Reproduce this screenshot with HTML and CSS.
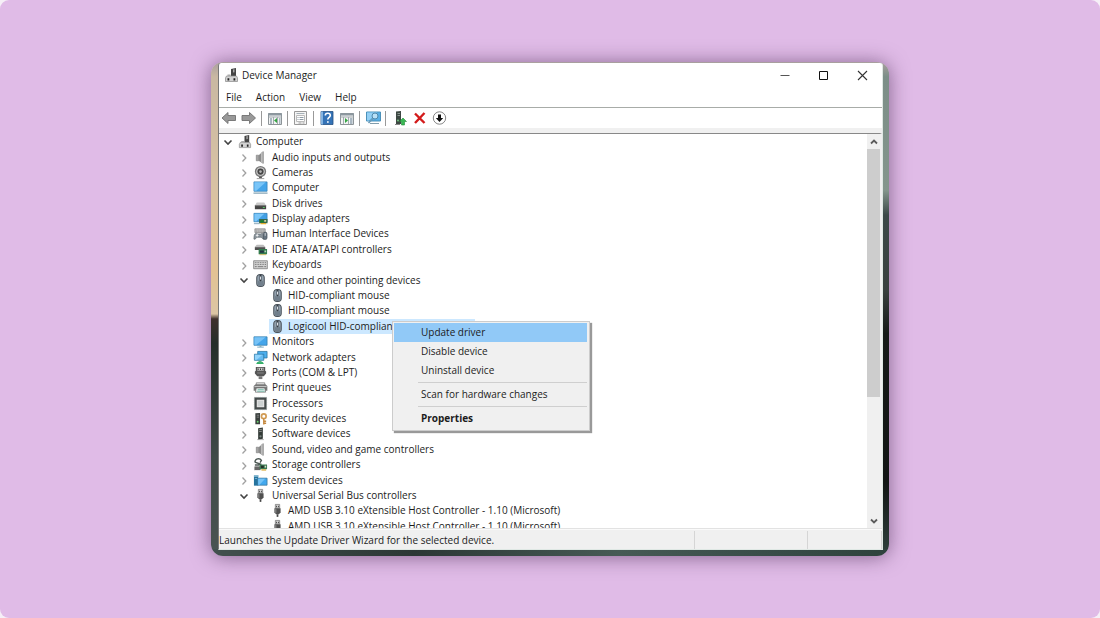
FILE: index.html
```html
<!DOCTYPE html>
<html lang="en">
<head>
<meta charset="utf-8">
<title>Device Manager</title>
<link rel="stylesheet" href="styles.css">
</head>
<body>
<svg class="sprite" aria-hidden="true">
  <symbol id="root" viewBox="0 0 16 16"><path d="M8 2l5-1v8H8z" fill="#454545"/><path d="M10 2.500l1.500-.3v3L10 5.500z" fill="#aaa"/><path d="M3.500 9h10l1 2v3.500h-12V11z" fill="#d2d2d2" stroke="#888" stroke-width=".7"/><path d="M4.500 11.200h1.800v2.300H4.500zM10.500 11.200h1.800v2.300h-1.800z" fill="#222"/><path d="M4.500 7.500h3V9h-3z" fill="#aaa"/></symbol>
  <symbol id="audio" viewBox="0 0 16 16"><path d="M3.500 5.500h2.500v6H3.500z" fill="#a5a5a5" stroke="#777" stroke-width=".6"/><path d="M6 5.500L10.500 1.500v13L6 11.500z" fill="#8b8b8b"/><path d="M8.500 3l2-1.500v13l-2-1.500z" fill="#bdbdbd"/><path d="M11 1.500v13" stroke="#777" stroke-width=".8"/></symbol>
  <symbol id="camera" viewBox="0 0 16 16"><circle cx="8" cy="7" r="6" fill="#777"/><circle cx="8" cy="7" r="4.600" fill="#c6c6c6"/><circle cx="8" cy="7" r="3.300" fill="#444"/><circle cx="8" cy="7" r="1.400" fill="#b4b4b4"/><path d="M6.500 12.500h3v1.500h-3z" fill="#555"/><path d="M4 14.500h8" stroke="#999"/></symbol>
  <symbol id="monitor" viewBox="0 0 16 16"><path d="M1 3h14v9H1z" fill="#45a5ea" stroke="#317eae" stroke-width=".8"/><path d="M1.500 3.500h12l-10 8h-2z" fill="#76c2f6"/><path d="M7 12.200h2v1.500H7z" fill="#8aa"/><path d="M4.500 14h7" stroke="#7aa8bd"/></symbol>
  <symbol id="computer" viewBox="0 0 16 16"><path d="M1 2h14v10H1z" fill="#45a5ea" stroke="#3681b5" stroke-width=".8"/><path d="M1.500 2.500h12l-10 9h-2z" fill="#79c5f8"/><path d="M.5 14h15" stroke="#86a5b6" stroke-width="1.200"/></symbol>
  <symbol id="disk" viewBox="0 0 16 16"><path d="M4 7h8l2 3H2z" fill="#c9c9c9"/><path d="M2 10h12v4H2z" fill="#444"/><path d="M2 10.300h12" stroke="#777"/><path d="M10.500 12.300h2" stroke="#57d767"/></symbol>
  <symbol id="display" viewBox="0 0 16 16"><path d="M1 2.500h14v9H1z" fill="#419fe4" stroke="#3681b5" stroke-width=".8"/><path d="M1.500 3H12l-8.500 8h-2z" fill="#79c5f8"/><path d="M1 13.500h6" stroke="#86a5b6"/><path d="M6.500 8.500h9V13h-9z" fill="#34684a"/><path d="M8 10h3v2H8z" fill="#182"/><path d="M8 13.500h6" stroke="#e4ae2d" stroke-width="1.500"/><path d="M12 9.500h2v2h-2z" fill="#cbd3a2"/></symbol>
  <symbol id="hid" viewBox="0 0 16 16"><path d="M2 3h11v4H2z" fill="#c4c4c4" stroke="#777" stroke-width=".7"/><path d="M3 4.500h9M3 6h9" stroke="#777" stroke-width=".6" stroke-dasharray="1 1"/><path d="M1 14c0-8 3-6 4-5.500h3c3-2 4 1 4 5.500-2 1-2-2-3.500-2H4.500C3 12 3 15 1 14z" fill="#8b949b" stroke="#59636a" stroke-width=".7"/><path d="M3 10h3M4.500 8.500v3" stroke="#fff" stroke-width=".8"/><rect x="11" y="6.500" width="4" height="8" rx="2" fill="#677581" stroke="#404a52" stroke-width=".6"/><path d="M13 7.500v3" stroke="#eee" stroke-width=".8"/></symbol>
  <symbol id="ide" viewBox="0 0 16 16"><path d="M2 5l2-2h7l2 2v3H2z" fill="#bbb"/><path d="M2 5.500h11v3H2z" fill="#505050"/><path d="M6 7.500h9V13H6z" fill="#337c4f"/><path d="M7.500 9h4v2.500h-4z" fill="#234"/><path d="M12.300 9H14v2h-1.700z" fill="#b7d1be"/><path d="M7 13.500h7" stroke="#cdb65d"/></symbol>
  <symbol id="keyboard" viewBox="0 0 16 16"><path d="M.7 4h14.600v8.500H.7z" fill="#d2d2d2" stroke="#777" stroke-width=".8"/><path d="M2 6h12M2 8h12" stroke="#757575" stroke-dasharray="1 .8"/><path d="M2 10.300h2M5 10.300h6M12 10.300h2" stroke="#757575"/></symbol>
  <symbol id="mouse" viewBox="0 0 16 16"><rect x="4" y="1.500" width="8" height="13" rx="3.500" fill="#93a1ae" stroke="#4b535b" stroke-width="1.100"/><path d="M5 7c1 3.500 5 3.500 6 0v5c-1 2.500-5 2.500-6 0z" fill="#717f8c"/><path d="M8 2v7" stroke="#343b43" stroke-width="2"/><path d="M8 3.800v3.200" stroke="#e7edf2"/></symbol>
  <symbol id="network" viewBox="0 0 16 16"><path d="M5 1.500h10v7H5z" fill="#4baeed" stroke="#28729e" stroke-width=".8"/><path d="M1.500 4.500h10V11h-10z" fill="#65bbf2" stroke="#28729e" stroke-width=".8"/><path d="M2 5h8l-6 5.500H2z" fill="#91d3fb"/><path d="M3.500 15c0-3.500 8-3.500 8 0z" fill="#33b068"/><path d="M6 11.400h3v2H6z" fill="#55b47e"/></symbol>
  <symbol id="ports" viewBox="0 0 16 16"><path d="M3 2h10v4l1 1v2l-2.500 3h-7L2 9V7l1-1z" fill="#555"/><path d="M4.500 3h7v3h-7z" fill="#c7c7c7"/><path d="M5 4.500h1M7.500 4.500h1M10 4.500h1" stroke="#333" stroke-width="1.500"/><path d="M6 12h4v3H6z" fill="#777"/><path d="M4.500 8.500h7" stroke="#888"/></symbol>
  <symbol id="printer" viewBox="0 0 16 16"><path d="M3.500 3h9v3h-9z" fill="#eee" stroke="#777" stroke-width=".8"/><path d="M.7 6.500l2-2h10.600l2 2v5H.7z" fill="#777"/><path d="M1.500 7h13" stroke="#ccc"/><path d="M3.500 8.500h9l1 4.500h-11z" fill="#edf4f4" stroke="#666" stroke-width=".7"/><path d="M5 10.300h6.500M4.500 12h8" stroke="#77bba9"/></symbol>
  <symbol id="cpu" viewBox="0 0 16 16"><path d="M1.500 1.500h13v13h-13z" fill="#454b4b" stroke="#8a9494" stroke-dasharray="1 1"/><path d="M4 4h8v8H4z" fill="#e6e6e6"/><path d="M5 5h6v6H5z" fill="#cdd2d2"/></symbol>
  <symbol id="security" viewBox="0 0 16 16"><path d="M2.500 2.500l5-.5v12h-5z" fill="#3b403e"/><path d="M4 4.500h2.500M4 6.500h2.500" stroke="#999" stroke-width=".8"/><circle cx="5" cy="11.500" r="1" fill="#68d46d"/><circle cx="11.500" cy="5.500" r="2.500" fill="none" stroke="#d19b54" stroke-width="1.800"/><path d="M11.500 8v6.500M12 11h2M12 13h2" stroke="#c4883d" stroke-width="1.500"/></symbol>
  <symbol id="software" viewBox="0 0 16 16"><path d="M5.500 2.500l5-1v12l-5 .8z" fill="#333b37"/><path d="M6.500 4l3-.4M6.500 6l3-.4" stroke="#aaa" stroke-width=".8"/><circle cx="8" cy="11" r="1.200" fill="#7a8580"/><path d="M4.500 14.500h7" stroke="#888" stroke-width=".7"/></symbol>
  <symbol id="storage" viewBox="0 0 16 16"><path d="M2 5.500C2 2 7 .5 9 3.500L7.500 6M2 5.500l7 2.500M2 8.500h5" fill="none" stroke="#4d5854" stroke-width="1.500"/><path d="M1.500 10H8v4H1.500z" fill="#666"/><path d="M7 8h8v5H7z" fill="#3c7851"/><path d="M8.500 9.300h3v2.400h-3z" fill="#223029"/><path d="M12.500 9.300H14v2h-1.500z" fill="#d5dfc7"/><path d="M9 13.800h5" stroke="#d9aa38" stroke-width="1.400"/></symbol>
  <symbol id="system" viewBox="0 0 16 16"><path d="M1 2.500h4.500v11H1z" fill="#25739e"/><path d="M1 2.500h5V4H1zM2 5.500h2.500v1H2z" fill="#8fc0d6"/><path d="M5 5.500h10v7.500H5z" fill="#42a8ee" stroke="#39779b" stroke-width=".8"/><path d="M5.500 6H13l-6 6.500H5.500z" fill="#75c4f7"/></symbol>
  <symbol id="usb" viewBox="0 0 16 16"><path d="M5.700 1.500h4.600V5.500H5.700z" fill="#d5d5d5" stroke="#777" stroke-width=".8"/><path d="M6.500 3h1v1.500h-1zM8.500 3h1v1.500h-1z" fill="#444"/><path d="M4.700 5.500h6.600V10l-1.800 2h-3l-1.800-2z" fill="#505050"/><path d="M6.200 6.500v4" stroke="#999"/><path d="M8 12v2.800" stroke="#444" stroke-width="1.800"/></symbol>
  <symbol id="closed" viewBox="0 0 16 16"><path d="M6.500 5.500L9.800 9l-3.300 3.500" fill="none" stroke="#a2a2a2" stroke-width="1.300"/></symbol>
  <symbol id="open" viewBox="0 0 16 16"><path d="M4.500 6.500L8 10l3.500-3.500" fill="none" stroke="#444" stroke-width="1.600"/></symbol>
</svg>

<main class="desktop">
<section class="window" aria-label="Device Manager">
  <header class="titlebar">
    <svg class="icon"><use href="#root"/></svg>
    <h1 class="title">Device Manager</h1>
    <button class="caption" aria-label="Minimize"><svg class="icon" viewBox="0 0 16 16"><path d="M3.500 8.500h9" stroke="#555"/></svg></button>
    <button class="caption" aria-label="Maximize"><svg class="icon" viewBox="0 0 16 16"><path d="M3.500 4.500h8v8h-8z" fill="none" stroke="#111"/></svg></button>
    <button class="caption" aria-label="Close"><svg class="icon" viewBox="0 0 16 16"><path d="M3 4l9 9M12 4l-9 9" stroke="#333" stroke-width="1.100"/></svg></button>
  </header>
  <nav class="menubar">
    <button>File</button><button>Action</button><button>View</button><button>Help</button>
  </nav>
  <div class="toolbar">
    <button aria-label="Back"><svg class="icon" viewBox="0 0 16 16"><path d="M1 8l6-5.500V5.500h7.500v5H7v3z" fill="#999" stroke="#717171" stroke-width=".9"/></svg></button>
    <button aria-label="Forward"><svg class="icon" viewBox="0 0 16 16"><path d="M14.500 8l-6-5.500V5.500H1v5h7.500v3z" fill="#999" stroke="#717171" stroke-width=".9"/></svg></button>
    <span class="sep"></span>
    <button aria-label="Show console tree"><svg class="icon" viewBox="0 0 16 16"><path d="M1.500 3.500h13v11h-13z" fill="#f2f3f3" stroke="#8d9498"/><path d="M1 4.500h14" stroke="#8c979f" stroke-width="2"/><path d="M1.500 7h13M6.500 7v7M10.500 7v7" stroke="#a3abb0"/><path d="M3 9h2M3 11h2M3 13h2M12 9h1.500M12 11h1.500M12 13h1.500" stroke="#637c92"/><path d="M10 8v5L7 10.500z" fill="#32a541"/></svg></button>
    <span class="sep"></span>
    <button aria-label="Properties"><svg class="icon" viewBox="0 0 16 16"><path d="M1.500 1.500h12v13h-12z" fill="#f5f5f5" stroke="#999"/><path d="M3.500 3.500h8" stroke="#a5b0b8"/><path d="M3.500 5.500h8v6h-8z" fill="#fff" stroke="#bbb"/><path d="M4.500 7.500h1M6.500 7.500h4M4.500 9.500h1M6.500 9.500h4" stroke="#8c9aa5"/><path d="M5.500 13h3M9.500 13h2" stroke="#999"/></svg></button>
    <span class="sep"></span>
    <button aria-label="Help"><svg class="icon" viewBox="0 0 16 16"><path d="M2 1.500h12v13H2z" fill="#3473b7" stroke="#244f82" stroke-width=".8"/><path d="M2 1.500h2v13H2z" fill="#84b4e1"/><path d="M6.300 5.500c0-3 5-3 5 0 0 2-2.500 1.800-2.500 4" fill="none" stroke="#fff" stroke-width="1.600"/><path d="M8 11.200h1.700v1.600H8z" fill="#fff"/></svg></button>
    <button aria-label="Show action pane"><svg class="icon" viewBox="0 0 16 16"><path d="M1.500 3.500h13v11h-13z" fill="#f2f3f3" stroke="#8d9498"/><path d="M1 4.500h14" stroke="#8c979f" stroke-width="2"/><path d="M1.500 7h13M4.500 7v7M9.500 7v7" stroke="#a3abb0"/><path d="M11 9h2.500M11 11h2.500M11 13h2.500" stroke="#637c92"/><path d="M6 8v5l3-2.500z" fill="#32a541"/></svg></button>
    <span class="sep"></span>
    <button aria-label="Scan for hardware changes"><svg class="icon" viewBox="0 0 16 16"><path d="M1.500 2h14v9h-14z" fill="#57aee6" stroke="#4b91b9"/><path d="M2 2.500h10l-8 8H2z" fill="#93d0f5"/><path d="M5 13.500h9" stroke="#829dac"/><circle cx="10" cy="6" r="3" fill="#b8e0f7" stroke="#4f88ab"/><path d="M8 8.500L3.500 13" stroke="#6b9ab7" stroke-width="1.600"/></svg></button>
    <span class="sep"></span>
    <button aria-label="Update driver"><svg class="icon" viewBox="0 0 16 16"><path d="M5 1.500l5-.5v13H5z" fill="#3d4843"/><path d="M6.500 3.500H9M6.500 5.500H9" stroke="#8b9690"/><circle cx="7" cy="10.500" r="1" fill="#74c581"/><path d="M4 14.500h5" stroke="#888"/><path d="M12 8l3.500 3.500h-2V15h-3v-3.500h-2z" fill="#39b853" stroke="#218b39" stroke-width=".6"/></svg></button>
    <button aria-label="Uninstall device"><svg class="icon" viewBox="0 0 16 16"><path d="M4 3.500l9.500 9.500M13.500 3L4 13" stroke="#d31b1b" stroke-width="2.400"/></svg></button>
    <button aria-label="Disable device"><svg class="icon" viewBox="0 0 16 16"><circle cx="8.500" cy="8" r="6.200" fill="#fff" stroke="#777" stroke-width=".9"/><path d="M7 4.500h3V8h2.200l-3.700 4L4.800 8H7z" fill="#111"/></svg></button>
  </div>

  <div class="body">
    <ul class="tree">
      <li><svg class="icon"><use href="#open"/></svg><svg class="icon"><use href="#root"/></svg><span class="label">Computer</span></li>
      <li class="l1"><svg class="icon"><use href="#closed"/></svg><svg class="icon"><use href="#audio"/></svg><span class="label">Audio inputs and outputs</span></li>
      <li class="l1"><svg class="icon"><use href="#closed"/></svg><svg class="icon"><use href="#camera"/></svg><span class="label">Cameras</span></li>
      <li class="l1"><svg class="icon"><use href="#closed"/></svg><svg class="icon"><use href="#computer"/></svg><span class="label">Computer</span></li>
      <li class="l1"><svg class="icon"><use href="#closed"/></svg><svg class="icon"><use href="#disk"/></svg><span class="label">Disk drives</span></li>
      <li class="l1"><svg class="icon"><use href="#closed"/></svg><svg class="icon"><use href="#display"/></svg><span class="label">Display adapters</span></li>
      <li class="l1"><svg class="icon"><use href="#closed"/></svg><svg class="icon"><use href="#hid"/></svg><span class="label">Human Interface Devices</span></li>
      <li class="l1"><svg class="icon"><use href="#closed"/></svg><svg class="icon"><use href="#ide"/></svg><span class="label">IDE ATA/ATAPI controllers</span></li>
      <li class="l1"><svg class="icon"><use href="#closed"/></svg><svg class="icon"><use href="#keyboard"/></svg><span class="label">Keyboards</span></li>
      <li class="l1"><svg class="icon"><use href="#open"/></svg><svg class="icon"><use href="#mouse"/></svg><span class="label">Mice and other pointing devices</span></li>
      <li class="l2"><svg class="icon"><use href="#mouse"/></svg><span class="label">HID-compliant mouse</span></li>
      <li class="l2"><svg class="icon"><use href="#mouse"/></svg><span class="label">HID-compliant mouse</span></li>
      <li class="l2 selected"><span class="highlight"><svg class="icon"><use href="#mouse"/></svg><span class="label">Logicool HID-compliant mouse</span></span>
        <div class="context">
          <button class="active">Update driver</button>
          <button>Disable device</button>
          <button>Uninstall device</button>
          <hr>
          <button>Scan for hardware changes</button>
          <hr>
          <button class="default">Properties</button>
        </div>
      </li>
      <li class="l1"><svg class="icon"><use href="#closed"/></svg><svg class="icon"><use href="#monitor"/></svg><span class="label">Monitors</span></li>
      <li class="l1"><svg class="icon"><use href="#closed"/></svg><svg class="icon"><use href="#network"/></svg><span class="label">Network adapters</span></li>
      <li class="l1"><svg class="icon"><use href="#closed"/></svg><svg class="icon"><use href="#ports"/></svg><span class="label">Ports (COM &amp; LPT)</span></li>
      <li class="l1"><svg class="icon"><use href="#closed"/></svg><svg class="icon"><use href="#printer"/></svg><span class="label">Print queues</span></li>
      <li class="l1"><svg class="icon"><use href="#closed"/></svg><svg class="icon"><use href="#cpu"/></svg><span class="label">Processors</span></li>
      <li class="l1"><svg class="icon"><use href="#closed"/></svg><svg class="icon"><use href="#security"/></svg><span class="label">Security devices</span></li>
      <li class="l1"><svg class="icon"><use href="#closed"/></svg><svg class="icon"><use href="#software"/></svg><span class="label">Software devices</span></li>
      <li class="l1"><svg class="icon"><use href="#closed"/></svg><svg class="icon"><use href="#audio"/></svg><span class="label">Sound, video and game controllers</span></li>
      <li class="l1"><svg class="icon"><use href="#closed"/></svg><svg class="icon"><use href="#storage"/></svg><span class="label">Storage controllers</span></li>
      <li class="l1"><svg class="icon"><use href="#closed"/></svg><svg class="icon"><use href="#system"/></svg><span class="label">System devices</span></li>
      <li class="l1"><svg class="icon"><use href="#open"/></svg><svg class="icon"><use href="#usb"/></svg><span class="label">Universal Serial Bus controllers</span></li>
      <li class="l2"><svg class="icon"><use href="#usb"/></svg><span class="label">AMD USB 3.10 eXtensible Host Controller - 1.10 (Microsoft)</span></li>
      <li class="l2"><svg class="icon"><use href="#usb"/></svg><span class="label">AMD USB 3.10 eXtensible Host Controller - 1.10 (Microsoft)</span></li>
    </ul>
    <div class="scrollbar">
      <button aria-label="Scroll up"><svg class="icon" viewBox="0 0 16 16"><path d="M5 9.500l3-3 3 3" fill="none" stroke="#5c5c5c" stroke-width="1.800"/></svg></button>
      <div class="track"><div class="thumb"></div></div>
      <button aria-label="Scroll down"><svg class="icon" viewBox="0 0 16 16"><path d="M5 6.500l3 3 3-3" fill="none" stroke="#5c5c5c" stroke-width="1.800"/></svg></button>
    </div>
  </div>
  <footer class="status">
    <span class="message">Launches the Update Driver Wizard for the selected device.</span>
    <span class="pane wide"></span>
    <span class="pane"></span>
  </footer>
</section>
</main>
</body>
</html>
```

FILE: styles.css
```css
* { box-sizing: border-box; }
html { background: #f6eff7; overflow: hidden; }
body {
  margin: 0;
  height: 100vh;
  min-height: 400px;
  padding: 62px 211px;
  border-radius: 9px;
  background: #e0bbe7;
  font: 10px/15px "Open Sans", "Noto Sans", sans-serif;
  color: #1c1c1c;
}
button {
  margin: 0;
  padding: 0;
  border: 0;
  background: none;
  font: inherit;
  color: inherit;
}
.sprite { position: absolute; width: 0; height: 0; }
.icon { display: block; flex: none; width: 16px; height: 16px; }

.desktop {
  height: 100%;
  padding: 1px 6px 6px 7px;
  border-radius: 12px;
  background:
    linear-gradient(90deg, #42504e, #2b3735 30%, #465a55 60%, #2e423d) bottom / 100% 7px no-repeat,
    linear-gradient(#aaa09f, #c9b8a2 3%, #d8c2a4 25%, #e3c293 42%, #dcc5a4 51%, #3f302c 52%, #252e2a 57%, #404a48 80%, #4a5452) left / 50% 100% no-repeat,
    linear-gradient(#aaa09f, #7c8e88 3%, #84958c 26%, #3c4948 31%, #39413f 46%, #161a18 55%, #121615 85%, #30423e) right / 50% 100% no-repeat;
  box-shadow: 0 1px 20px rgba(70, 40, 80, .6);
}
.window {
  display: flex;
  flex-direction: column;
  height: 100%;
  border-left: 1px solid #777;
  border-right: 1px solid #dfe8e4;
  border-bottom: 1px solid #dfe8e4;
  border-top-left-radius: 3px;
  border-top-right-radius: 3px;
  background: #fff;
  overflow: hidden;
}
.titlebar {
  display: flex;
  align-items: center;
  height: 24px;
  padding-left: 4px;
}
.title { flex: 1; margin: 0; padding-left: 3px; font-size: 10px; font-weight: 400; }
.caption { display: flex; justify-content: center; width: 39px; }
.menubar {
  display: flex;
  gap: 14px;
  height: 21px;
  padding-left: 7px;
  border-bottom: 1px solid #a8aca8;
}
.toolbar {
  display: flex;
  align-items: center;
  height: 20px;
}
.toolbar button { display: flex; justify-content: center; width: 20px; }
.sep { width: 6px; height: 15px; background: linear-gradient(#999, #999) 2px 0 / 1px 100% no-repeat; }

.body {
  display: flex;
  flex: 1;
  min-height: 0;
  overflow: hidden;
  border-top: 5px solid #f0f0f0;
}
.tree {
  display: grid;
  grid-template-rows: repeat(26, minmax(0, 1fr));
  flex: 1;
  height: 401px;
  margin: 0;
  padding: 0;
  list-style: none;
  border-top: 1px solid #888;
}
.tree li {
  display: flex;
  align-items: center;
  position: relative;
  padding-left: 1px;
  white-space: nowrap;
}
.tree .l1 { padding-left: 17px; }
.tree .l2 { padding-left: 50px; }
.tree .icon + .icon, .l2 .icon { width: 15px; height: 15px; margin-left: 1px; }
.label { padding-left: 4px; }
.l2 .label { padding-left: 3px; }
.highlight {
  display: flex;
  align-items: center;
  width: 206px;
  height: 15px;
  background: #cce8ff;
}
.context {
  position: absolute;
  z-index: 1;
  left: 173px;
  top: 2px;
  width: 198px;
  padding: 1px 2px 2px 1px;
  border: 1px solid #ccc;
  background: #f0f0f0;
  box-shadow: 2px 2px 1px #999;
}
.context button {
  display: block;
  width: 100%;
  height: 19px;
  padding-left: 27px;
  text-align: left;
}
.context .active { background: #91c9f7; }
.context .default { font-weight: 700; }
.context hr {
  height: 1px;
  margin: 2px 0 2px 24px;
  border: 0;
  background: #cfcfcf;
}
.scrollbar {
  display: flex;
  flex-direction: column;
  width: 15px;
  border-top: 1px solid #888;
  border-right: 2px solid #f0f0f0;
  background: #f0f0f0;
}
.scrollbar button { display: flex; justify-content: center; width: 13px; height: 15px; }
.track { flex: 1; }
.thumb { height: 68%; background: #cdcdcd; }
.status {
  display: flex;
  height: 21px;
  padding: 3px 0 0;
  background: #f0f0f0;
  box-shadow: inset 0 1px #e2e2e2, inset 0 2px #fafafa;
}
.message { flex: 1; line-height: 18px; border-right: 1px solid #d5d5d5; }
.pane { width: 74px; border-right: 1px solid #d5d5d5; }
.wide { width: 113px; }
```
